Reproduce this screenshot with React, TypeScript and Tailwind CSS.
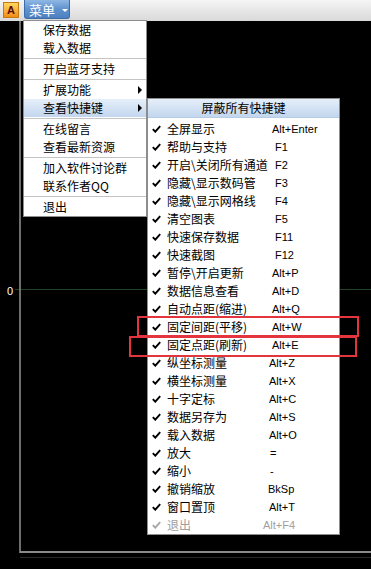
import React from "react";

type SubItem = { label: string; k: string; pad: string; disabled?: boolean };

const subItems: SubItem[] = [
  { label: "全屏显示", k: "Alt+Enter", pad: "pl-[10px]" },
  { label: "帮助与支持", k: "F1", pad: "pl-[13px]" },
  { label: "开启\\关闭所有通道", k: "F2", pad: "pl-[13px]" },
  { label: "隐藏\\显示数码管", k: "F3", pad: "pl-[13px]" },
  { label: "隐藏\\显示网格线", k: "F4", pad: "pl-[13px]" },
  { label: "清空图表", k: "F5", pad: "pl-[13px]" },
  { label: "快速保存数据", k: "F11", pad: "pl-[13px]" },
  { label: "快速截图", k: "F12", pad: "pl-[13px]" },
  { label: "暂停\\开启更新", k: "Alt+P", pad: "pl-[10px]" },
  { label: "数据信息查看", k: "Alt+D", pad: "pl-[10px]" },
  { label: "自动点距(缩进)", k: "Alt+Q", pad: "pl-[10px]" },
  { label: "固定间距(平移)", k: "Alt+W", pad: "pl-[10px]" },
  { label: "固定点距(刷新)", k: "Alt+E", pad: "pl-[10px]" },
  { label: "纵坐标测量", k: "Alt+Z", pad: "pl-[7px]" },
  { label: "横坐标测量", k: "Alt+X", pad: "pl-[7px]" },
  { label: "十字定标", k: "Alt+C", pad: "pl-[7px]" },
  { label: "数据另存为", k: "Alt+S", pad: "pl-[7px]" },
  { label: "载入数据", k: "Alt+O", pad: "pl-[7px]" },
  { label: "放大", k: "=", pad: "pl-[8px]" },
  { label: "缩小", k: "-", pad: "pl-[8px]" },
  { label: "撤销缩放", k: "BkSp", pad: "pl-[6px]" },
  { label: "窗口置顶", k: "Alt+T", pad: "pl-[7px]" },
  { label: "退出", k: "Alt+F4", pad: "pl-[1px]", disabled: true },
];

function Check({ gray }: { gray?: boolean }) {
  return (
    <svg width="9" height="8" viewBox="0 0 9 8" className={gray ? "text-[#a8a8a8]" : "text-black"}>
      <path d="M0.8 4.2 L3.3 6.7 L8.2 1.2" fill="none" stroke="currentColor" strokeWidth="1.9" />
    </svg>
  );
}

function Arrow() {
  return <span className="w-0 h-0 border-y-[4px] border-y-transparent border-l-[4px] border-l-black" />;
}

function Sep() {
  return (
    <div className="h-[3px] flex items-center">
      <div className="h-px w-full bg-[#c4c4c4]" />
    </div>
  );
}

function MainRow({ text, arrow, active }: { text: string; arrow?: boolean; active?: boolean }) {
  return (
    <div
      className={
        "h-[18px] flex items-center justify-between pl-[19px] pr-[4px] whitespace-nowrap " +
        (active ? "bg-gradient-to-b from-[#e6eff9] to-[#c2d6ee]" : "")
      }
    >
      <span className="leading-none">{text}</span>
      {arrow && <Arrow />}
    </div>
  );
}

export default function App() {
  return (
    <div className="relative w-[371px] h-[569px] bg-black overflow-hidden flex flex-col font-['Noto_Sans_CJK_SC',sans-serif] text-[12px] text-black">
      {/* top bar */}
      <div className="h-[21px] flex items-start bg-gradient-to-b from-[#f5f5f5] to-[#d9d9d9] pl-[3px]">
        <div className="mt-[2px] w-[16px] h-[16px] bg-gradient-to-b from-[#ffd860] to-[#f08c12] border border-[#c87a10] flex items-center justify-center">
          <span className="font-['Liberation_Sans',sans-serif] font-bold text-[11px] leading-none text-[#5a0c00]">A</span>
        </div>
        <div className="ml-[5px] w-[46px] h-[19px] rounded-b-[3px] border border-t-0 border-[#3e6ca8] bg-gradient-to-b from-[#8fb7e4] via-[#5f92cd] to-[#4d80c0] flex items-center pl-[4px]">
          <span className="text-white text-[13px] leading-none">菜单</span>
          <span className="ml-[7px] mt-[2px] w-0 h-0 border-x-[3px] border-x-transparent border-t-[3px] border-t-white" />
        </div>
      </div>

      {/* chart */}
      <div className="relative flex-1">
        <svg className="absolute inset-0" width="371" height="548">
          <line x1="15" y1="268.5" x2="371" y2="268.5" stroke="#234223" strokeWidth="1" />
          <line x1="20" y1="0" x2="20" y2="532" stroke="#8a8a8a" strokeWidth="1.6" />
          <line x1="20" y1="531" x2="371" y2="531" stroke="#8a8a8a" strokeWidth="2" />
          <line x1="20" y1="536.5" x2="371" y2="536.5" stroke="#2a2a2a" strokeWidth="1" />
        </svg>
        <span className="absolute left-[7px] top-[262px] text-white text-[11px] font-['Liberation_Sans',sans-serif]">0</span>
      </div>

      {/* main menu */}
      <div className="absolute left-[23px] top-[20px] w-[124px] bg-white border border-[#8e8e8e]">
        <MainRow text="保存数据" />
        <MainRow text="载入数据" />
        <Sep />
        <MainRow text="开启蓝牙支持" />
        <Sep />
        <MainRow text="扩展功能" arrow />
        <MainRow text="查看快捷键" arrow active />
        <Sep />
        <MainRow text="在线留言" />
        <MainRow text="查看最新资源" />
        <Sep />
        <MainRow text="加入软件讨论群" />
        <MainRow text="联系作者QQ" />
        <Sep />
        <MainRow text="退出" />
      </div>

      {/* sub menu */}
      <div className="absolute left-[147px] top-[98px] w-[193px] bg-white border border-[#8e8e8e]">
        <div className="h-[19px] flex items-center justify-center bg-gradient-to-b from-[#e6eff9] to-[#c2d6ee] border-b border-[#b6cbe4]">
          <span className="leading-none">屏蔽所有快捷键</span>
        </div>
        <div className="h-[2px]" />
        {subItems.map((it) => (
          <div key={it.label} className="h-[18px] flex items-center pl-[4px] whitespace-nowrap">
            <span className="w-[15px] shrink-0 flex items-center">
              <Check gray={it.disabled} />
            </span>
            <span className={"w-[95px] shrink-0 leading-none overflow-visible " + (it.disabled ? "text-[#a0a0a0]" : "")}>
              {it.label}
            </span>
            <span
              className={
                "font-['Liberation_Sans',Arial,sans-serif] text-[11px] leading-none " +
                it.pad +
                (it.disabled ? " text-[#a0a0a0]" : "")
              }
            >
              {it.k}
            </span>
          </div>
        ))}
      </div>

      {/* annotations */}
      <div className="absolute left-[137px] top-[316px] w-[222px] h-[21px] border-2 border-[#e4343e]" />
      <div className="absolute left-[129px] top-[336px] w-[228px] h-[21px] border-2 border-[#e4343e]" />
    </div>
  );
}
